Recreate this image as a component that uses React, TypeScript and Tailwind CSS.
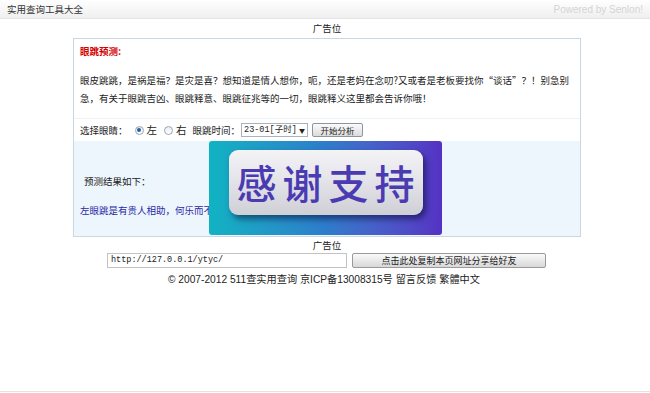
const cjk = { fontFamily: '"Noto Sans CJK SC", "Liberation Sans", sans-serif' };

const Radio = ({ checked }: { checked?: boolean }) => (
  <span className="inline-flex w-[9px] h-[9px] rounded-full border border-[#9aa6b4] bg-gradient-to-b from-[#e8eef4] to-white items-center justify-center">
    {checked && <span className="w-[4px] h-[4px] rounded-full bg-[#2a5fa8]" />}
  </span>
);

export default function App() {
  return (
    <div className="w-[650px] h-[393px] bg-white flex flex-col text-[#222]" style={cjk}>
      {/* top bar */}
      <div className="h-[19px] flex items-center justify-between px-[7px] bg-gradient-to-b from-white to-[#efefef] border-b border-[#e4e4e4]">
        <span className="text-[9.5px] text-[#333]">实用查询工具大全</span>
        <span className="text-[10px] text-[#d4d4d4]" style={{ fontFamily: '"Liberation Sans", sans-serif' }}>
          Powered by Senlon!
        </span>
      </div>

      <div className="h-[19px] flex items-center justify-center text-[9.5px] pl-[4px]">广告位</div>

      {/* main box */}
      <div className="ml-[73px] w-[508px] h-[199px] border border-[#c9d7e2] flex flex-col relative">
        <div className="px-[6px] pt-[3px] h-[79px]">
          <div className="text-[9.5px] font-bold text-[#d40000] leading-[18px]">眼跳预测:</div>
          <div className="mt-[11px] text-[9.5px] leading-[18px] whitespace-nowrap">
            眼皮跳跳，是祸是福？是灾是喜？想知道是情人想你，呃，还是老妈在念叨?又或者是老板要找你“谈话”？！别急别
            <br />
            急，有关于眼跳吉凶、眼跳释意、眼跳征兆等的一切，眼跳释义这里都会告诉你哦！
          </div>
        </div>
        <div className="border-t border-[#eef2f5] h-[23px] flex items-center px-[6px] text-[9.5px]">
          <span>选择眼睛：</span>
          <span className="ml-[7px] flex items-center gap-[3px]">
            <Radio checked />
            <span className="text-[10.5px]">左</span>
          </span>
          <span className="ml-[7px] flex items-center gap-[3px]">
            <Radio />
            <span className="text-[10.5px]">右</span>
          </span>
          <span className="ml-[6px]">眼跳时间：</span>
          <span className="ml-[1px] h-[14px] w-[67px] border border-[#a9b3bd] bg-white flex items-center justify-between px-[2px] text-[8.5px]">
            <span style={{ fontFamily: '"Liberation Mono", "Noto Sans CJK SC", monospace' }}>23-01[子时]</span>
            <span className="text-[6px] text-[#222]">▼</span>
          </span>
          <span className="ml-[4px] h-[14px] w-[51px] border border-[#8d96a0] rounded-[2px] bg-gradient-to-b from-[#fbfbfb] to-[#dcdcdc] flex items-center justify-center text-[8.5px]">
            开始分析
          </span>
        </div>
        <div className="flex-1 bg-[#eef6fd] px-[10px] text-[9.5px]">
          <div className="mt-[33px]">预测结果如下：</div>
          <div className="mt-[15px] ml-[-4px] text-[#2929a8]">左眼跳是有贵人相助，何乐而不为呢！</div>
        </div>

        {/* overlay picture */}
        <div className="absolute left-[135px] top-[102px] w-[233px] h-[94px] rounded-[3px] bg-gradient-to-r from-[#0fb3c2] via-[#2d7ccb] to-[#5531c4] flex items-center justify-center">
          <div className="w-[194px] h-[65px] mb-[12px] rounded-[9px] bg-gradient-to-b from-[#f4f4f7] via-[#e2e2e8] to-[#cfcfd6] shadow-[3px_4px_6px_rgba(0,0,40,0.5)] flex items-center justify-center">
            <span className="text-[40px] leading-none text-[#4a3bb2] tracking-[6px] pl-[6px] font-medium">感谢支持</span>
          </div>
        </div>
      </div>

      <div className="h-[14px] mt-[1px] flex items-center justify-center text-[9.5px] pl-[4px]">广告位</div>

      <div className="flex items-center ml-[107px] mt-[1px] gap-[5px]">
        <div
          className="w-[240px] h-[15px] border border-[#c3c3c3] bg-white flex items-center px-[3px] text-[8.5px]"
          style={{ fontFamily: '"Liberation Mono", monospace' }}
        >
          http://127.0.0.1/ytyc/
        </div>
        <div className="w-[194px] h-[15px] border border-[#9a9a9a] rounded-[2px] bg-gradient-to-b from-[#fafafa] to-[#d8d8d8] flex items-center justify-center text-[9px]">
          点击此处复制本页网址分享给好友
        </div>
      </div>

      <div
        className="mt-[4px] text-center text-[10.2px] text-[#222] pr-[2px]"
        style={{ fontFamily: '"Liberation Sans", "Noto Sans CJK SC", sans-serif' }}
      >
        © 2007-2012 511查实用查询 京ICP备13008315号 留言反馈 繁體中文
      </div>

      <div className="mt-auto h-[2px] border-t border-[#e3e3e3]" />
    </div>
  );
}
